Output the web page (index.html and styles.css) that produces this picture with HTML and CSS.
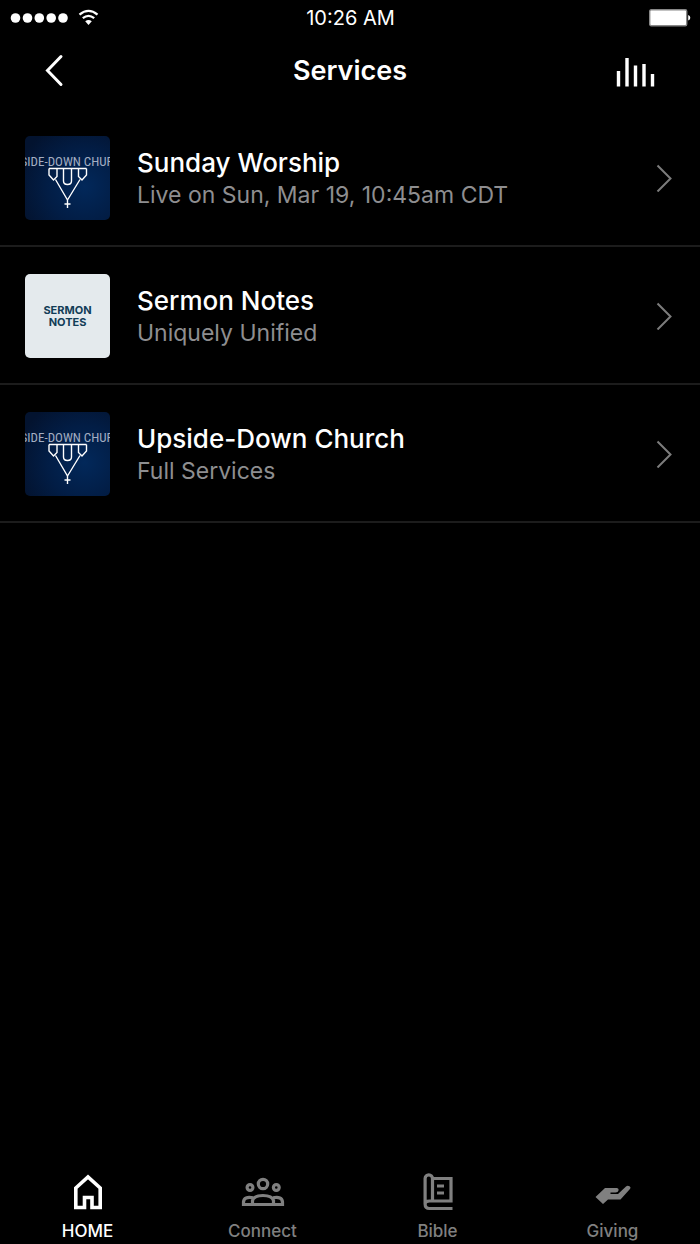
FILE: index.html
```
<!DOCTYPE html>
<html lang="en">
<head>
<meta charset="utf-8">
<meta name="viewport" content="width=device-width, initial-scale=1">
<title>Services</title>
<link rel="stylesheet" href="styles.css">
</head>
<body>
<svg class="defs" width="0" height="0" aria-hidden="true">
  <defs>
    <radialGradient id="navy" cx="0.7" cy="0.6" r="0.8">
      <stop offset="0" stop-color="#02285a"/>
      <stop offset="0.55" stop-color="#021d45"/>
      <stop offset="1" stop-color="#03132f"/>
    </radialGradient>
    <symbol id="church" viewBox="0 0 85 84">
      <rect width="85" height="84" fill="url(#navy)"/>
      <text class="art-title" x="42" y="30" text-anchor="middle">SIDE-DOWN CHUR</text>
      <g fill="none" stroke="#fff" stroke-width="1.4">
        <path d="M24 32.500H61.500M24 32.500V39L28.500 44L32 40.500V32.500M61.500 32.500V39L57 44L53.500 40.500V32.500M30.500 43.500L42.500 64L55 43.500M38.500 32.500V45Q38.500 48.500 42.500 48.500T46.500 45V32.500M42.500 63V72M39.500 68H45.500"/>
      </g>
    </symbol>
    <symbol id="chevron" viewBox="0 0 16 28">
      <path d="M1.500 1.500L14.500 14.500L1.500 27.500" fill="none" stroke="#7c7c7c" stroke-width="2"/>
    </symbol>
  </defs>
</svg>
<div class="app">
  <div class="status">
    <div class="signal">
      <svg width="90" height="20" viewBox="0 0 90 20" aria-label="Signal and Wi-Fi">
        <g fill="#fff"><circle cx="5.500" cy="10" r="4.800"/><circle cx="17.500" cy="10" r="4.800"/><circle cx="29.300" cy="10" r="4.800"/><circle cx="41.200" cy="10" r="4.800"/><circle cx="53" cy="10" r="4.800"/></g>
        <path d="M69.500 6.700Q78.500 -.900 87.500 6.700M72.800 10.200Q78.500 5.500 84.200 10.200" fill="none" stroke="#fff" stroke-width="2.300"/>
        <path d="M75.200 13.200Q78.500 10.700 81.800 13.200L78.500 17Z" fill="#fff"/>
      </svg>
    </div>
    <time class="clock">10:26 AM</time>
    <div class="battery">
      <svg width="42" height="18" viewBox="0 0 42 18" aria-label="Battery full">
        <rect x=".700" y=".700" width="37" height="16" rx="1.500" fill="#fff" stroke="#888" stroke-width="1.400"/>
        <path d="M39.200 6Q41.300 6.500 41.300 8.800T39.200 11.600Z" fill="#fff"/>
      </svg>
    </div>
  </div>
  <header class="bar">
    <button class="icon-button" type="button" aria-label="Back">
      <svg width="20" height="34" viewBox="0 0 20 34"><path d="M17 2.500L3.500 16.500L17 30.500" fill="none" stroke="#fff" stroke-width="3" stroke-linecap="round"/></svg>
    </button>
    <h1 class="title">Services</h1>
    <button class="icon-button end" type="button" aria-label="Now playing">
      <svg width="40" height="32" viewBox="0 0 40 32"><path d="M2.500 16V31.500M11 3V31.500M19.500 10.500V31.500M28 9V31.500M36.500 19V31.500" stroke="#fff" stroke-width="3.400"/></svg>
    </button>
  </header>
  <main class="list">
    <a class="row" href="#worship">
      <svg class="thumb" aria-hidden="true"><use href="#church"/></svg>
      <span class="copy"><span class="name">Sunday Worship</span><span class="detail">Live on Sun, Mar 19, 10:45am CDT</span></span>
      <svg class="chevron" aria-hidden="true"><use href="#chevron"/></svg>
    </a>
    <a class="row" href="#notes">
      <span class="thumb notes"><span>SERMON</span><span>NOTES</span></span>
      <span class="copy"><span class="name">Sermon Notes</span><span class="detail">Uniquely Unified</span></span>
      <svg class="chevron" aria-hidden="true"><use href="#chevron"/></svg>
    </a>
    <a class="row" href="#church-series">
      <svg class="thumb" aria-hidden="true"><use href="#church"/></svg>
      <span class="copy"><span class="name">Upside-Down Church</span><span class="detail">Full Services</span></span>
      <svg class="chevron" aria-hidden="true"><use href="#chevron"/></svg>
    </a>
  </main>
  <nav class="tabs">
    <a class="tab active" href="#home" aria-current="page">
      <svg width="44" height="40" viewBox="0 0 44 40"><path d="M9.800 16L22 5L34.200 16V35.500H26V25.500H18.500V35.500H9.800Z" fill="none" stroke="currentColor" stroke-width="3.600"/></svg>
      <span>HOME</span>
    </a>
    <a class="tab" href="#connect">
      <svg width="44" height="40" viewBox="0 0 44 40"><g fill="none" stroke="currentColor" stroke-width="3.200"><circle cx="22" cy="12" r="4.700"/><circle cx="9" cy="15.500" r="2.900"/><circle cx="35.300" cy="15.500" r="2.900"/><path d="M11.500 32.500V28.500Q13 23.500 22 23.500T32.500 28.500V32.500M12 25.800Q3 24 2.500 30V32.500H41.500V30Q41 24 32 25.800"/></g></svg>
      <span>Connect</span>
    </a>
    <a class="tab" href="#bible">
      <svg width="44" height="40" viewBox="0 0 44 40"><path d="M16.500 29V6.500A3.700 3.700 0 0 0 9.100 6.500V32Q9.100 36.500 13.500 36.500H36.500M16.500 6.500H35V29H13.500Q9.100 29 9.100 32.500M21 14H28M21 21H28" fill="none" stroke="currentColor" stroke-width="3.200"/></svg>
      <span>Bible</span>
    </a>
    <a class="tab" href="#giving">
      <svg width="44" height="40" viewBox="0 0 44 40"><path d="M4.500 25L14 16H25.500Q28 16 27.500 18.500Q27 20.500 24.500 20.500H19.500V22H27L35 14.500Q36.500 13 38.500 14.300T38.500 17.500L29.500 27.500H17L12 32Z" fill="currentColor"/></svg>
      <span>Giving</span>
    </a>
  </nav>
</div>
</body>
</html>
```
FILE: styles.css
```
* { box-sizing: border-box; }

body {
  margin: 0;
  background: #000;
  color: #fff;
  font-family: Inter, "Liberation Sans", sans-serif;
}

.defs { position: absolute; }

svg { display: block; }

.app {
  display: flex;
  flex-direction: column;
  min-height: 100vh;
}

.status,
.bar {
  display: grid;
  grid-template-columns: 1fr auto 1fr;
  align-items: center;
}

.status {
  height: 36px;
  padding: 0 9px 0 10px;
}

.clock {
  font-size: 20px;
  line-height: 24px;
}

.battery { justify-self: end; }

.bar {
  height: 73px;
  padding: 0 44px 3px;
}

.title {
  margin: 0;
  font-size: 27px;
  font-weight: 600;
  line-height: 36px;
}

.icon-button {
  justify-self: start;
  padding: 0;
  border: 0;
  background: none;
}

.icon-button.end { justify-self: end; }

.row {
  display: flex;
  align-items: center;
  gap: 27px;
  padding: 27px 28px 25px 25px;
  border-bottom: 2px solid #1c1c1c;
  color: inherit;
  text-decoration: none;
}

.thumb {
  flex: none;
  width: 85px;
  height: 84px;
  border-radius: 5px;
  overflow: hidden;
}

.art-title {
  font-family: "Roboto Condensed", Roboto, "Liberation Sans", sans-serif;
  font-size: 13px;
  fill: #a3aec2;
}

.notes {
  display: flex;
  flex-direction: column;
  align-items: center;
  justify-content: center;
  background: #e4eaed;
  color: #123d57;
  font-size: 11px;
  font-weight: 700;
  line-height: 12px;
}

.copy {
  display: flex;
  flex: 1;
  flex-direction: column;
  min-width: 0;
  padding-top: 2px;
}

.name {
  font-size: 26px;
  font-weight: 500;
  line-height: 32px;
}

.detail {
  color: #8e8e90;
  font-size: 23px;
  line-height: 32px;
}

.chevron {
  flex: none;
  width: 16px;
  height: 28px;
}

.tabs {
  display: grid;
  grid-template-columns: repeat(4, 1fr);
  margin-top: auto;
  padding-bottom: 2px;
}

.tab {
  display: flex;
  flex-direction: column;
  align-items: center;
  gap: 8px;
  color: #808080;
  font-size: 17px;
  font-weight: 500;
  line-height: 22px;
  text-decoration: none;
}

.tab.active { color: #fff; }
```
